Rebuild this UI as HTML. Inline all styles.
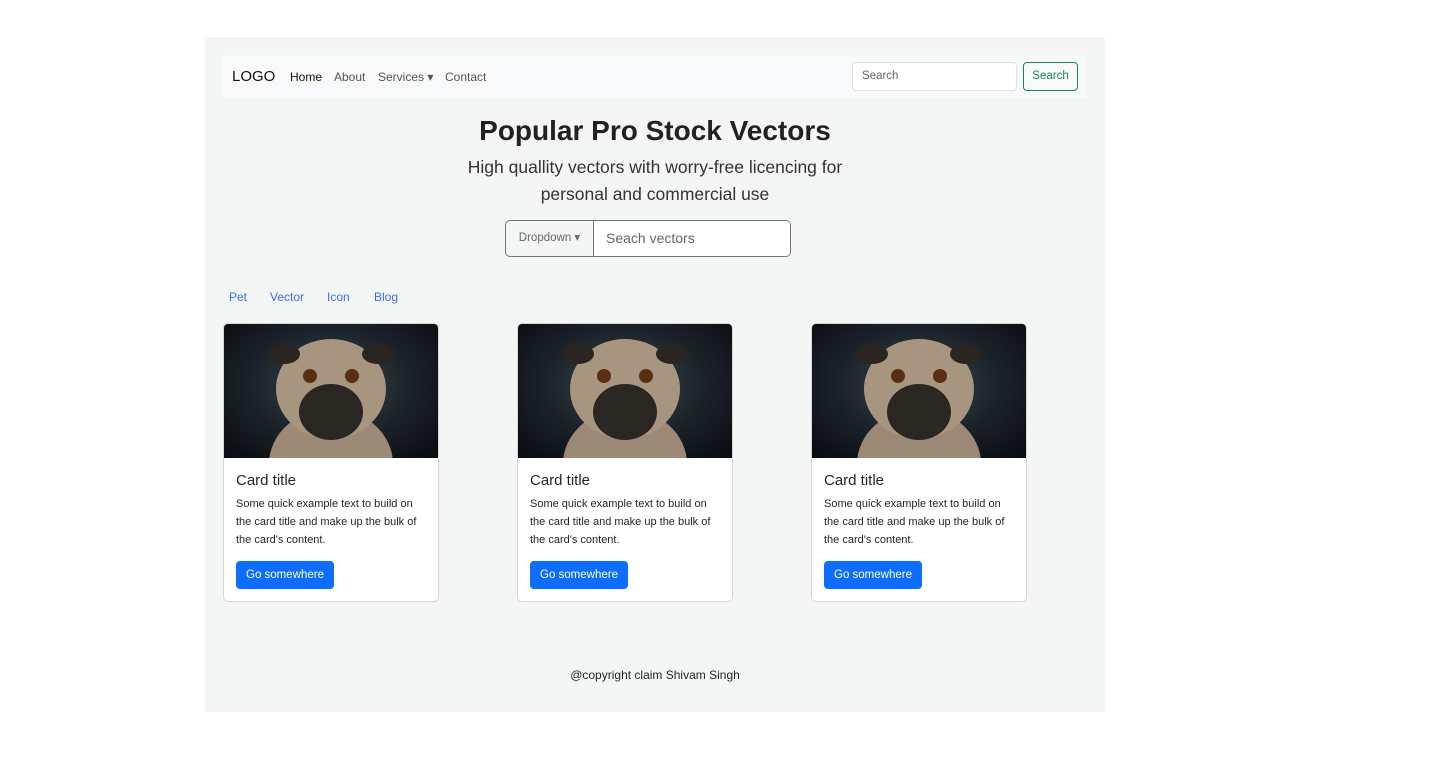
<!DOCTYPE html>
<html><head><style>
body{margin:0;background:#fff;font-family:"Liberation Sans",sans-serif;color:#212529;}
.wrap{position:absolute;left:205px;top:37px;width:900px;height:675px;background:#f4f6f6;}
.nav{position:absolute;left:18px;top:18px;width:864px;height:43px;background:#f8f9fa;}
.nav span{position:absolute;top:15px;font-size:12px;color:#555;}
.abs{position:absolute;}
.card{position:absolute;top:286px;width:214px;height:277px;background:#fff;border:1px solid #d4d6d8;border-radius:5px;overflow:hidden;}
.img{height:134px;background:radial-gradient(ellipse at 50% 45%,#3c4650 0%,#1a2128 55%,#080b0f 100%);position:relative;}
.body{padding:12px;}
.t{font-size:15px;margin-top:2px;}
.p{font-size:11px;line-height:18px;margin-top:6px;padding-right:6px;}
.btn{display:inline-block;margin-top:12px;background:#0d6efd;color:#fff;font-size:11.5px;padding:8px 10px;border-radius:4px;}
</style></head><body>
<div class="wrap">
<div class="nav">
<span style="left:9px;top:13px;font-size:15px;color:#111">LOGO</span>
<span style="left:67px;color:#111">Home</span>
<span style="left:111px">About</span>
<span style="left:155px">Services ▾</span>
<span style="left:222px">Contact</span>
<div class="abs" style="left:629px;top:7px;width:165px;height:29px;border:1px solid #dee2e6;border-radius:4px;background:#fff;font-size:11.5px;color:#666;line-height:27px;padding-left:9px;box-sizing:border-box">Search</div>
<div class="abs" style="left:800px;top:7px;width:55px;height:29px;border:1px solid #198754;border-radius:4px;font-size:11.5px;color:#198754;line-height:27px;text-align:center;box-sizing:border-box">Search</div>
</div>
<div class="abs" style="left:0;width:900px;top:78px;text-align:center;font-size:28px;font-weight:bold;color:#222">Popular Pro Stock Vectors</div>
<div class="abs" style="left:240px;width:420px;top:117px;text-align:center;font-size:17.5px;line-height:27px;color:#333">High quallity vectors with worry-free licencing for personal and commercial use</div>
<div class="abs" style="left:300px;top:183px;width:284px;height:35px;border:1px solid #6c757d;border-radius:5px;overflow:hidden;display:flex">
<div style="width:87px;border-right:1px solid #6c757d;font-size:11.5px;color:#666;line-height:35px;text-align:center">Dropdown ▾</div>
<div style="flex:1;background:#fff;font-size:14px;color:#666;line-height:35px;padding-left:12px">Seach vectors</div>
</div>
<div class="abs" style="top:253px;left:24px;font-size:12px;color:#3b6cf0">Pet</div>
<div class="abs" style="top:253px;left:65px;font-size:12px;color:#3b6cf0">Vector</div>
<div class="abs" style="top:253px;left:122px;font-size:12px;color:#3b6cf0">Icon</div>
<div class="abs" style="top:253px;left:169px;font-size:12px;color:#3b6cf0">Blog</div>

<div class="card" style="left:18px"><div class="img"><svg width="214" height="134"><ellipse cx="107" cy="140" rx="62" ry="55" fill="#9c8a76"/><ellipse cx="107" cy="65" rx="55" ry="50" fill="#a89580"/><ellipse cx="60" cy="30" rx="16" ry="10" fill="#2a2520"/><ellipse cx="154" cy="30" rx="16" ry="10" fill="#2a2520"/><ellipse cx="107" cy="88" rx="32" ry="28" fill="#2a2622"/><circle cx="86" cy="52" r="7" fill="#5a2e12"/><circle cx="128" cy="52" r="7" fill="#5a2e12"/></svg></div><div class="body"><div class="t">Card title</div><div class="p">Some quick example text to build on the card title and make up the bulk of the card's content.</div><div class="btn">Go somewhere</div></div></div>
<div class="card" style="left:312px"><div class="img"><svg width="214" height="134"><ellipse cx="107" cy="140" rx="62" ry="55" fill="#9c8a76"/><ellipse cx="107" cy="65" rx="55" ry="50" fill="#a89580"/><ellipse cx="60" cy="30" rx="16" ry="10" fill="#2a2520"/><ellipse cx="154" cy="30" rx="16" ry="10" fill="#2a2520"/><ellipse cx="107" cy="88" rx="32" ry="28" fill="#2a2622"/><circle cx="86" cy="52" r="7" fill="#5a2e12"/><circle cx="128" cy="52" r="7" fill="#5a2e12"/></svg></div><div class="body"><div class="t">Card title</div><div class="p">Some quick example text to build on the card title and make up the bulk of the card's content.</div><div class="btn">Go somewhere</div></div></div>
<div class="card" style="left:606px"><div class="img"><svg width="214" height="134"><ellipse cx="107" cy="140" rx="62" ry="55" fill="#9c8a76"/><ellipse cx="107" cy="65" rx="55" ry="50" fill="#a89580"/><ellipse cx="60" cy="30" rx="16" ry="10" fill="#2a2520"/><ellipse cx="154" cy="30" rx="16" ry="10" fill="#2a2520"/><ellipse cx="107" cy="88" rx="32" ry="28" fill="#2a2622"/><circle cx="86" cy="52" r="7" fill="#5a2e12"/><circle cx="128" cy="52" r="7" fill="#5a2e12"/></svg></div><div class="body"><div class="t">Card title</div><div class="p">Some quick example text to build on the card title and make up the bulk of the card's content.</div><div class="btn">Go somewhere</div></div></div>

<div class="abs" style="left:0;width:900px;top:631px;text-align:center;font-size:12px">@copyright claim Shivam Singh</div>
</div>
</body></html>
